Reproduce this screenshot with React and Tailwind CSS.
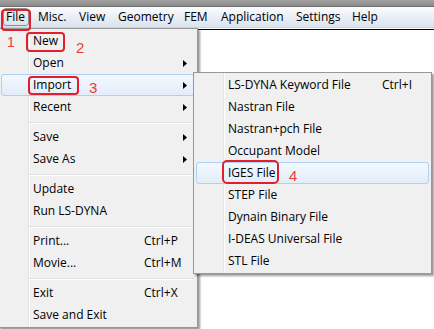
import React from "react";

const Arrow = () => (
  <svg width="4" height="7" viewBox="0 0 4 7" className="block">
    <path d="M0 0 L4 3.5 L0 7 Z" fill="#000" />
  </svg>
);

function Row({ label, shortcut, arrow, active, labelW }) {
  return (
    <div
      className={
        "mx-[1px] h-[22px] flex items-center pl-[31px] pr-[7px] rounded-[3px] border " +
        (active
          ? "border-[#aecff7] bg-[linear-gradient(#f2f7fd,#e3edf9)]"
          : "border-transparent")
      }
    >
      <span className="shrink-0 whitespace-nowrap" style={{ width: labelW }}>
        {label}
      </span>
      {shortcut && <span className="whitespace-nowrap">{shortcut}</span>}
      {arrow && (
        <span className="ml-auto">
          <Arrow />
        </span>
      )}
    </div>
  );
}

const Sep = () => (
  <div className="h-[8px] pt-[4px] pl-[29px] pr-[2px]">
    <div className="h-[2px] border-t border-[#e0e0e0] border-b border-b-white" />
  </div>
);

const menuBg =
  "bg-[linear-gradient(to_right,#f0f0f0_29px,#e2e3e3_29px,#e2e3e3_30px,#ffffff_30px,#ffffff_31px,#f0f0f0_31px)]";

export default function App() {
  const barItems = [
    ["Misc.", "w-[41px]"],
    ["View", "w-[39px]"],
    ["Geometry", "w-[66px]"],
    ["FEM", "w-[37px]"],
    ["Application", "w-[75px]"],
    ["Settings", "w-[56px]"],
    ["Help", "w-[60px]"],
  ];
  return (
    <div className="relative w-[434px] h-[329px] overflow-hidden bg-white text-[12px] text-black font-['Segoe_UI','Open_Sans',sans-serif]">
      {/* title bar remnant */}
      <div className="h-[7px] bg-[linear-gradient(#a2a2a2,#8a8a8a)] border-b border-[#6f6f6f]" />
      {/* menu bar */}
      <div className="h-[21px] flex items-center pl-[3px] bg-[linear-gradient(#fbfcfe,#e6ecf4_60%,#dbe3ee)] border-b border-[#c9d3e0]">
        <div className="w-[26px] h-[18px] flex items-center pl-[2px] rounded-[3px] border border-[#8e8e8e] bg-[linear-gradient(#eef1f5,#dee3ea)]">
          File
        </div>
        {barItems.map(([t, w]) => (
          <div key={t} className={"h-[18px] flex items-center pl-[9px] " + w}>
            {t}
          </div>
        ))}
      </div>
      <div className="h-[1px] bg-white" />
      <div className="h-[1px] bg-black" />

      {/* File menu */}
      <div
        className={
          "absolute left-[-2px] top-[28px] w-[200px] h-[300px] border border-[#979797] p-[1px] shadow-[2px_2px_2px_rgba(0,0,0,0.4)] " +
          menuBg
        }
      >
        <Row label="New" labelW={111} />
        <Row label="Open" labelW={111} arrow />
        <Row label="Import" labelW={111} arrow active />
        <Row label="Recent" labelW={111} arrow />
        <Sep />
        <Row label="Save" labelW={111} arrow />
        <Row label="Save As" labelW={111} arrow />
        <Sep />
        <Row label="Update" labelW={111} />
        <Row label="Run LS-DYNA" labelW={111} />
        <Sep />
        <Row label="Print..." labelW={111} shortcut="Ctrl+P" />
        <Row label="Movie..." labelW={111} shortcut="Ctrl+M" />
        <Sep />
        <Row label="Exit" labelW={111} shortcut="Ctrl+X" />
        <Row label="Save and Exit" labelW={111} />
      </div>

      {/* Import submenu */}
      <div
        className={
          "absolute left-[193px] top-[72px] w-[239px] h-[202px] border border-[#979797] p-[1px] shadow-[2px_2px_2px_rgba(0,0,0,0.4)] " +
          menuBg
        }
      >
        <Row label="LS-DYNA Keyword File" labelW={154} shortcut="Ctrl+I" />
        <Row label="Nastran File" labelW={154} />
        <Row label="Nastran+pch File" labelW={154} />
        <Row label="Occupant Model" labelW={154} />
        <Row label="IGES File" labelW={154} active />
        <Row label="STEP File" labelW={154} />
        <Row label="Dynain Binary File" labelW={154} />
        <Row label="I-DEAS Universal File" labelW={154} />
        <Row label="STL File" labelW={154} />
      </div>

      {/* annotations */}
      <div className="absolute left-[1px] top-[9px] w-[30px] h-[22px] border-2 border-[#e3202a] rounded-[4px]" />
      <div className="absolute left-[26px] top-[32px] w-[39px] h-[20px] border-2 border-[#e3202a] rounded-[4px]" />
      <div className="absolute left-[28px] top-[76px] w-[51px] h-[19px] border-2 border-[#e3202a] rounded-[4px]" />
      <div className="absolute left-[222px] top-[160px] w-[57px] h-[24px] border-2 border-[#e3202a] rounded-[5px]" />
      <div className="absolute left-[7px] top-[34px] text-[14px] leading-[16px] text-[#ef3b3b] font-['Liberation_Sans',sans-serif]">1</div>
      <div className="absolute left-[76px] top-[39px] text-[15px] leading-[17px] text-[#ef3b3b] font-['Liberation_Sans',sans-serif]">2</div>
      <div className="absolute left-[89px] top-[79px] text-[15px] leading-[17px] text-[#ef3b3b] font-['Liberation_Sans',sans-serif]">3</div>
      <div className="absolute left-[289px] top-[167px] text-[15px] leading-[17px] text-[#ef3b3b] font-['Liberation_Sans',sans-serif]">4</div>
    </div>
  );
}
